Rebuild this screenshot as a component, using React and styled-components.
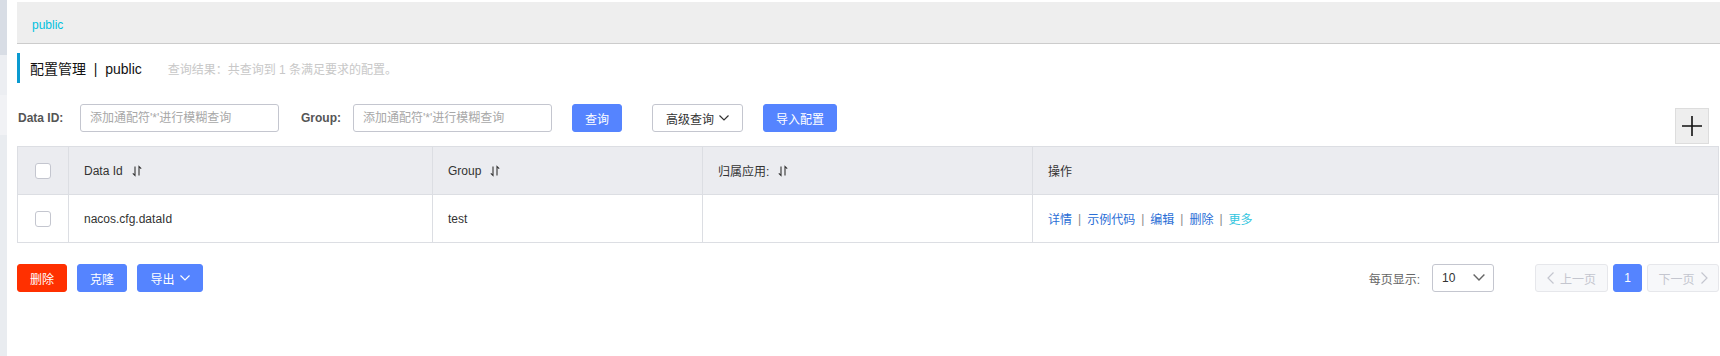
import React from 'react'
import styled, { createGlobalStyle } from 'styled-components'

const GlobalStyle = createGlobalStyle`
  html, body {
    margin: 0;
    padding: 0;
    background: #fff;
  }
  body {
    font-family: "Liberation Sans", "Noto Sans CJK SC", sans-serif;
    font-size: 12px;
    color: #333;
  }
  * { box-sizing: border-box; }
`

const SortIcon = () => (
    <svg width="12" height="12" viewBox="0 0 12 12" fill="none" stroke="#333" strokeWidth="1.1">
        <path d="M4 1.5V10.5L1.8 8.3" />
        <path d="M8 10.5V1.5L10.2 3.7" />
    </svg>
)

const ChevronDown = ({ color = '#333', size = 10 }) => (
    <svg width={size} height={size * 0.6} viewBox="0 0 10 6" fill="none" stroke={color} strokeWidth="1.2">
        <path d="M0.5 0.5L5 5L9.5 0.5" />
    </svg>
)

const Chevron = ({ dir }) => (
    <svg width="7" height="12" viewBox="0 0 7 12" fill="none" stroke="#c4c6cf" strokeWidth="1.2">
        {dir === 'left' ? <path d="M6.5 0.5L1 6L6.5 11.5" /> : <path d="M0.5 0.5L6 6L0.5 11.5" />}
    </svg>
)

const App = () => {
    const headers = [
        { title: 'Data Id', sort: true },
        { title: 'Group', sort: true },
        { title: '归属应用:', sort: true },
        { title: '操作', sort: false },
    ]
    const ops = ['详情', '示例代码', '编辑', '删除']
    return (
        <Page>
            <GlobalStyle />
            <Sidebar>
                <SideItem tone="#d8dde5" size="55px" />
                <SideItem tone="#eceef2" size="40px" />
                <SideItem tone="#f1f2f5" size="40px" />
                <SideItem tone="#e9ecf0" size="1" />
            </Sidebar>
            <Main>
                <NamespaceBar>
                    <NamespaceLink>public</NamespaceLink>
                </NamespaceBar>
                <TitleRow>
                    <Title>配置管理&nbsp;&nbsp;|&nbsp;&nbsp;public</Title>
                    <Summary>查询结果：共查询到 1 条满足要求的配置。</Summary>
                </TitleRow>
                <SearchRow>
                    <Label width="50px">Data ID:</Label>
                    <Input placeholder="添加通配符'*'进行模糊查询" />
                    <Label width="40px" gap="22px">Group:</Label>
                    <Input placeholder="添加通配符'*'进行模糊查询" />
                    <Button variant="primary" width="50px" style={{ marginLeft: 20 }}>查询</Button>
                    <Button variant="normal" width="91px" style={{ marginLeft: 30 }}>
                        高级查询 <ChevronDown />
                    </Button>
                    <Button variant="primary" width="74px" style={{ marginLeft: 20 }}>导入配置</Button>
                    <PlusButton>
                        <svg width="20" height="20" viewBox="0 0 20 20" stroke="#111" strokeWidth="1.6">
                            <path d="M0 10H20M10 0V20" />
                        </svg>
                    </PlusButton>
                </SearchRow>
                <Table>
                    <HeadCell center><Checkbox /></HeadCell>
                    {headers.map((h) => (
                        <HeadCell key={h.title}>
                            {h.title}
                            {h.sort && <SortIcon />}
                        </HeadCell>
                    ))}
                    <BodyCell center><Checkbox /></BodyCell>
                    <BodyCell>nacos.cfg.dataId</BodyCell>
                    <BodyCell>test</BodyCell>
                    <BodyCell />
                    <BodyCell>
                        {ops.map((o) => (
                            <React.Fragment key={o}>
                                <OpLink>{o}</OpLink>
                                <OpSep>|</OpSep>
                            </React.Fragment>
                        ))}
                        <OpLink more>更多</OpLink>
                    </BodyCell>
                </Table>
                <FooterRow>
                    <ButtonGroup>
                        <Button variant="danger" width="50px">删除</Button>
                        <Button variant="primary" width="50px">克隆</Button>
                        <Button variant="primary" width="66px">
                            导出 <ChevronDown color="#fff" />
                        </Button>
                    </ButtonGroup>
                    <Pager>
                        <PageSizeLabel>每页显示:</PageSizeLabel>
                        <Select>
                            <span>10</span>
                            <ChevronDown color="#666" size={12} />
                        </Select>
                        <PageButton width="73px" style={{ marginLeft: 36 }}>
                            <Chevron dir="left" /> 上一页
                        </PageButton>
                        <PageButton current width="29px">1</PageButton>
                        <PageButton width="72px">
                            下一页 <Chevron dir="right" />
                        </PageButton>
                    </Pager>
                </FooterRow>
            </Main>
        </Page>
    )
}

export default App

const Page = styled.div`
    display: flex;
    width: 1720px;
    min-height: 356px;
`

const Sidebar = styled.div`
    width: 7px;
    flex-shrink: 0;
    display: flex;
    flex-direction: column;
`

const SideItem = styled.div`
    background: ${(p) => p.tone};
    flex: ${(p) => (p.size === '1' ? '1' : `0 0 ${p.size}`)};
`

const Main = styled.div`
    flex: 1;
    padding: 2px 0 0 10px;
    min-width: 0;
`

const NamespaceBar = styled.div`
    height: 42px;
    background: #eeeeee;
    border-bottom: 1px solid #cccccc;
    display: flex;
    align-items: center;
    padding: 4px 0 0 15px;
`

const NamespaceLink = styled.span`
    color: #00c1de;
    font-size: 12px;
`

const TitleRow = styled.div`
    margin-top: 9px;
    height: 30px;
    border-left: 3px solid #0a9ad0;
    padding-left: 10px;
    display: flex;
    align-items: center;
`

const Title = styled.span`
    font-size: 14px;
    color: #111;
`

const Summary = styled.span`
    margin-left: 26px;
    font-size: 12px;
    color: #c8c8c8;
`

const SearchRow = styled.div`
    margin-top: 21px;
    display: flex;
    align-items: flex-start;
    height: 40px;
    padding-right: 11px;
`

const Label = styled.label`
    width: ${(p) => p.width};
    height: 28px;
    line-height: 28px;
    font-weight: bold;
    font-size: 12px;
    color: #555;
    white-space: nowrap;
    margin-left: ${(p) => p.gap || '1px'};
    margin-right: 12px;
`

const Input = styled.input`
    width: 199px;
    height: 28px;
    border: 1px solid #c4c6cf;
    border-radius: 3px;
    padding: 0 9px;
    font-family: inherit;
    font-size: 12px;
    outline: none;
    &::placeholder {
        color: #a8a8a8;
    }
`

const Button = styled.button`
    height: 28px;
    width: ${(p) => p.width};
    border-radius: 3px;
    font-family: inherit;
    font-size: 12px;
    padding: 0;
    display: inline-flex;
    align-items: center;
    justify-content: center;
    gap: 5px;
    border: 1px solid
        ${(p) => (p.variant === 'normal' ? '#c4c6cf' : p.variant === 'danger' ? '#ff3000' : '#5584ff')};
    background: ${(p) => (p.variant === 'normal' ? '#fff' : p.variant === 'danger' ? '#ff3000' : '#5584ff')};
    color: ${(p) => (p.variant === 'normal' ? '#333' : '#fff')};
`

const PlusButton = styled.div`
    margin-left: auto;
    margin-top: 4px;
    width: 34px;
    height: 36px;
    background: #eeeeee;
    border: 1px solid #dddddd;
    display: flex;
    align-items: center;
    justify-content: center;
`

const Table = styled.div`
    margin-top: 2px;
    display: grid;
    grid-template-columns: 51px 364px 270px 330px 1fr;
    border-top: 1px solid #dcdee3;
    border-left: 1px solid #dcdee3;
    margin-right: 1px;
`

const Cell = styled.div`
    height: 48px;
    display: flex;
    align-items: center;
    gap: 8px;
    padding: 0 ${(p) => (p.center ? '0' : '15px')};
    justify-content: ${(p) => (p.center ? 'center' : 'flex-start')};
    border-right: 1px solid #dcdee3;
    border-bottom: 1px solid #dcdee3;
    font-size: 12px;
    color: #333;
`

const HeadCell = styled(Cell)`
    background: #ebecf0;
`

const BodyCell = styled(Cell)`
    background: #fff;
    gap: 0;
`

const Checkbox = styled.span`
    width: 16px;
    height: 16px;
    border: 1px solid #c4c6cf;
    border-radius: 3px;
    background: #fff;
    display: inline-block;
`

const OpLink = styled.a`
    color: ${(p) => (p.more ? '#33c6e0' : '#2a6ed6')};
    cursor: pointer;
`

const OpSep = styled.span`
    color: #888;
    margin: 0 6px;
`

const FooterRow = styled.div`
    margin-top: 21px;
    display: flex;
    justify-content: space-between;
    align-items: center;
    margin-right: 1px;
`

const ButtonGroup = styled.div`
    display: flex;
    gap: 10px;
`

const Pager = styled.div`
    display: flex;
    align-items: center;
    gap: 5px;
`

const PageSizeLabel = styled.span`
    color: #666;
    font-size: 12px;
    margin-right: 7px;
`

const Select = styled.div`
    width: 62px;
    height: 28px;
    border: 1px solid #c4c6cf;
    border-radius: 3px;
    display: flex;
    align-items: center;
    justify-content: space-between;
    padding: 0 8px 0 9px;
    color: #333;
    font-size: 12px;
`

const PageButton = styled.div`
    width: ${(p) => p.width};
    height: 28px;
    border-radius: 3px;
    display: flex;
    align-items: center;
    justify-content: center;
    gap: 6px;
    font-size: 12px;
    border: 1px solid ${(p) => (p.current ? '#5584ff' : '#e6e7eb')};
    background: ${(p) => (p.current ? '#5584ff' : '#f7f8fa')};
    color: ${(p) => (p.current ? '#fff' : '#c4c6cf')};
`
